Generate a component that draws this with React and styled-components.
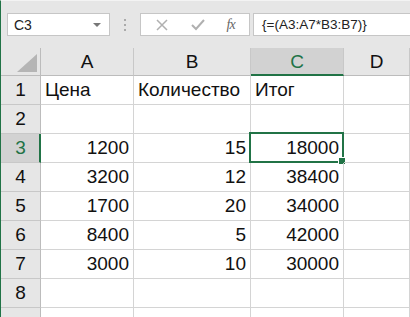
import React from "react";
import styled, { createGlobalStyle } from "styled-components";

const GlobalStyle = createGlobalStyle`
  html, body {
    margin: 0;
    padding: 0;
    background: #e6e6e6;
    overflow: hidden;
  }
  * { box-sizing: border-box; }
`;

const green = "#217346";

const Window = styled.div`
  width: 410px;
  height: 317px;
  overflow: hidden;
  border-left: 1px solid ${green};
  border-top: 1px solid #f3f3f3;
  background: #e6e6e6;
  font-family: "Liberation Sans", Arial, sans-serif;
  display: flex;
  flex-direction: column;
`;

const FormulaBar = styled.div`
  display: flex;
  align-items: center;
  height: 48px;
  padding: 12px 0 12px 6px;
`;

const NameBox = styled.div`
  width: 103px;
  height: 23px;
  background: #fff;
  border: 1px solid #c6c6c6;
  display: flex;
  align-items: center;
  justify-content: space-between;
  padding: 0 8px 0 6px;
  font-size: 14px;
  color: #222;
`;

const Arrow = styled.span`
  width: 0;
  height: 0;
  border-left: 4px solid transparent;
  border-right: 4px solid transparent;
  border-top: 4px solid #777;
`;

const Grip = styled.div`
  width: 30px;
  display: flex;
  flex-direction: column;
  align-items: center;
  gap: 3px;
  span {
    width: 2px;
    height: 2px;
    background: #aaa;
  }
`;

const ButtonBox = styled.div`
  width: 110px;
  height: 23px;
  background: #fff;
  border: 1px solid #c6c6c6;
  display: flex;
  align-items: center;
  justify-content: space-around;
  padding: 0 4px;
  margin-right: 3px;
`;

const Fx = styled.span`
  font-family: "Liberation Serif", serif;
  font-style: italic;
  font-size: 14px;
  color: #666;
  letter-spacing: -1px;
`;

const FormulaInput = styled.div`
  flex: 1;
  height: 23px;
  background: #fff;
  border: 1px solid #c6c6c6;
  border-right: none;
  display: flex;
  align-items: center;
  padding-left: 8px;
  font-size: 13.5px;
  color: #222;
`;

const Sheet = styled.div`
  display: grid;
  grid-template-columns: 40px 93px 117px 93px 1fr;
  grid-template-rows: 28px repeat(9, 29px);
  background: #fff;
`;

const Corner = styled.div`
  background: #e6e6e6;
  border-right: 1px solid #bcbcbc;
  border-bottom: 1px solid #bcbcbc;
  position: relative;
  &::after {
    content: "";
    position: absolute;
    right: 3px;
    bottom: 3px;
    width: 0;
    height: 0;
    border-left: 20px solid transparent;
    border-bottom: 18px solid #b5b5b5;
  }
`;

const ColHead = styled.div`
  background: ${({ $active }) => ($active ? "#d2d2d2" : "#e6e6e6")};
  color: ${({ $active }) => ($active ? green : "#111")};
  border-right: 1px solid #c8c8c8;
  border-bottom: ${({ $active }) =>
    $active ? `2px solid ${green}` : "1px solid #bcbcbc"};
  display: flex;
  align-items: center;
  justify-content: center;
  font-size: 19px;
  padding-top: ${({ $active }) => ($active ? "1px" : "0")};
`;

const RowHead = styled.div`
  background: ${({ $active }) => ($active ? "#d2d2d2" : "#e6e6e6")};
  color: ${({ $active }) => ($active ? green : "#111")};
  border-right: ${({ $active }) =>
    $active ? `2px solid ${green}` : "1px solid #bcbcbc"};
  border-bottom: 1px solid #c8c8c8;
  display: flex;
  align-items: center;
  justify-content: center;
  font-size: 19px;
  padding-left: ${({ $active }) => ($active ? "1px" : "0")};
`;

const Cell = styled.div`
  position: relative;
  border-right: 1px solid #d4d4d4;
  border-bottom: 1px solid #d4d4d4;
  display: flex;
  align-items: center;
  justify-content: ${({ $num }) => ($num ? "flex-end" : "flex-start")};
  padding: 0 4px;
  font-size: 19px;
  color: #111;
  white-space: nowrap;
`;

const Selection = styled.div`
  position: absolute;
  left: -2px;
  top: -2px;
  right: -1px;
  bottom: -1px;
  border: 2px solid ${green};
  pointer-events: none;
  &::after {
    content: "";
    position: absolute;
    right: -4px;
    bottom: -4px;
    width: 6px;
    height: 6px;
    background: ${green};
    border: 1px solid #fff;
  }
`;

const rows = [
  ["Цена", "Количество", "Итог"],
  [],
  [1200, 15, 18000],
  [3200, 12, 38400],
  [1700, 20, 34000],
  [8400, 5, 42000],
  [3000, 10, 30000],
  [],
  [],
];

const cols = ["A", "B", "C", "D"];

export default function App() {
  return (
    <>
      <GlobalStyle />
      <Window>
        <FormulaBar>
          <NameBox>
            C3
            <Arrow />
          </NameBox>
          <Grip>
            <span />
            <span />
            <span />
          </Grip>
          <ButtonBox>
            <svg width="14" height="14" viewBox="0 0 14 14">
              <path d="M2 2L12 12M12 2L2 12" stroke="#b0b0b0" strokeWidth="1.5" />
            </svg>
            <svg width="16" height="14" viewBox="0 0 16 14">
              <path d="M2 7L6 11L14 2" stroke="#b0b0b0" strokeWidth="2" fill="none" />
            </svg>
            <Fx>fx</Fx>
          </ButtonBox>
          <FormulaInput>{"{=(A3:A7*B3:B7)}"}</FormulaInput>
        </FormulaBar>
        <Sheet>
          <Corner />
          {cols.map((c) => (
            <ColHead key={c} $active={c === "C"}>
              {c}
            </ColHead>
          ))}
          {rows.map((r, i) => (
            <React.Fragment key={i}>
              {/* row 9 sits below the visible edge, its number is not shown */}
              <RowHead $active={i === 2}>{i < 8 ? i + 1 : null}</RowHead>
              {[0, 1, 2, 3].map((j) => {
                const v = r[j];
                return (
                  <Cell key={j} $num={typeof v === "number"}>
                    {v}
                    {i === 2 && j === 2 ? <Selection /> : null}
                  </Cell>
                );
              })}
            </React.Fragment>
          ))}
        </Sheet>
      </Window>
    </>
  );
}
